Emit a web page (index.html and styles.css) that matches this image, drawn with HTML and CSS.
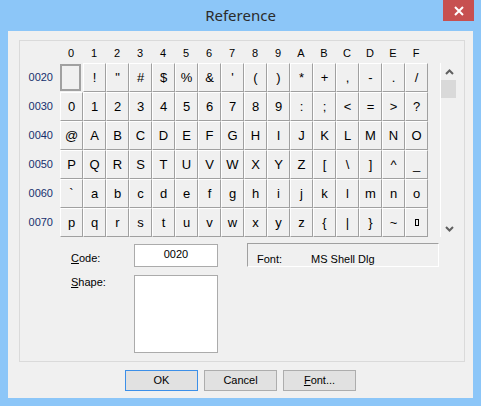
FILE: index.html
```html
<!DOCTYPE html>
<html>
<head>
<meta charset="utf-8">
<link rel="stylesheet" href="styles.css">
</head>
<body>
<div class="window">
  <div class="titlebar">
    <div class="title">Reference</div>
    <div class="close"><svg width="10" height="10" viewBox="0 0 10 10"><path d="M1 1 L9 9 M9 1 L1 9" stroke="#fff" stroke-width="2" fill="none"/></svg></div>
  </div>
  <div class="client">
    <div class="panel">
      <div class="chart">
        <div class="map" id="map">
          <div class="corner"></div>
          <div class="hd">0</div><div class="hd">1</div><div class="hd">2</div><div class="hd">3</div>
          <div class="hd">4</div><div class="hd">5</div><div class="hd">6</div><div class="hd">7</div>
          <div class="hd">8</div><div class="hd">9</div><div class="hd">A</div><div class="hd">B</div>
          <div class="hd">C</div><div class="hd">D</div><div class="hd">E</div><div class="hd">F</div>

          <div class="rl">0020</div>
          <div class="cell sel"></div><div class="cell">!</div><div class="cell">"</div><div class="cell">#</div>
          <div class="cell">$</div><div class="cell">%</div><div class="cell">&amp;</div><div class="cell">'</div>
          <div class="cell">(</div><div class="cell">)</div><div class="cell">*</div><div class="cell">+</div>
          <div class="cell">,</div><div class="cell">-</div><div class="cell">.</div><div class="cell">/</div>

          <div class="rl">0030</div>
          <div class="cell">0</div><div class="cell">1</div><div class="cell">2</div><div class="cell">3</div>
          <div class="cell">4</div><div class="cell">5</div><div class="cell">6</div><div class="cell">7</div>
          <div class="cell">8</div><div class="cell">9</div><div class="cell">:</div><div class="cell">;</div>
          <div class="cell">&lt;</div><div class="cell">=</div><div class="cell">&gt;</div><div class="cell">?</div>

          <div class="rl">0040</div>
          <div class="cell">@</div><div class="cell">A</div><div class="cell">B</div><div class="cell">C</div>
          <div class="cell">D</div><div class="cell">E</div><div class="cell">F</div><div class="cell">G</div>
          <div class="cell">H</div><div class="cell">I</div><div class="cell">J</div><div class="cell">K</div>
          <div class="cell">L</div><div class="cell">M</div><div class="cell">N</div><div class="cell">O</div>

          <div class="rl">0050</div>
          <div class="cell">P</div><div class="cell">Q</div><div class="cell">R</div><div class="cell">S</div>
          <div class="cell">T</div><div class="cell">U</div><div class="cell">V</div><div class="cell">W</div>
          <div class="cell">X</div><div class="cell">Y</div><div class="cell">Z</div><div class="cell">[</div>
          <div class="cell">\</div><div class="cell">]</div><div class="cell">^</div><div class="cell">_</div>

          <div class="rl">0060</div>
          <div class="cell">`</div><div class="cell">a</div><div class="cell">b</div><div class="cell">c</div>
          <div class="cell">d</div><div class="cell">e</div><div class="cell">f</div><div class="cell">g</div>
          <div class="cell">h</div><div class="cell">i</div><div class="cell">j</div><div class="cell">k</div>
          <div class="cell">l</div><div class="cell">m</div><div class="cell">n</div><div class="cell">o</div>

          <div class="rl">0070</div>
          <div class="cell">p</div><div class="cell">q</div><div class="cell">r</div><div class="cell">s</div>
          <div class="cell">t</div><div class="cell">u</div><div class="cell">v</div><div class="cell">w</div>
          <div class="cell">x</div><div class="cell">y</div><div class="cell">z</div><div class="cell">{</div>
          <div class="cell">|</div><div class="cell">}</div><div class="cell">~</div><div class="cell"><span class="del"></span></div>
        </div>
        <div class="scroll">
          <div class="arrow"><svg width="9" height="6" viewBox="0 0 9 6"><path d="M1 5 L4.5 1.5 L8 5" stroke="#606060" stroke-width="2" fill="none"/></svg></div>
          <div class="thumb"></div>
          <div class="track"></div>
          <div class="arrow"><svg width="9" height="6" viewBox="0 0 9 6"><path d="M1 1 L4.5 4.5 L8 1" stroke="#606060" stroke-width="2" fill="none"/></svg></div>
        </div>
      </div>
      <div class="details">
        <div class="lbl lbl-code"><u>C</u>ode:</div>
        <div class="codebox">0020</div>
        <div class="spacer"></div>
        <div class="fontbox"><span class="fk">Font:</span><span>MS Shell Dlg</span></div>
        <div class="lbl lbl-shape"><u>S</u>hape:</div>
        <div class="shapebox"></div>
      </div>
    </div>
    <div class="buttons">
      <div class="btn default">OK</div>
      <div class="btn">Cancel</div>
      <div class="btn"><u>F</u>ont...</div>
    </div>
  </div>
</div>
</body>
</html>
```
FILE: styles.css
```css
html, body {
  margin: 0;
  padding: 0;
}
body {
  background: #8cc6f8;
  font-family: "Liberation Sans", Arial, sans-serif;
  font-size: 11px;
  color: #000;
}
.window {
  width: 481px;
  height: 406px;
  box-sizing: border-box;
  background: #8cc6f8;
  display: flex;
  flex-direction: column;
  padding: 0 8px 8px 8px;
}
.titlebar {
  height: 31px;
  display: grid;
  grid-template-columns: 1fr auto 1fr;
  margin: 0 -8px;
}
.title {
  grid-column: 2;
  font-family: "Noto Sans", "Open Sans", sans-serif;
  font-size: 15px;
  color: #2b2b2b;
  line-height: 20px;
  padding-top: 5px;
}
.close {
  grid-column: 3;
  justify-self: end;
  align-self: start;
  width: 31px;
  height: 21px;
  margin-right: 7px;
  background: #c75050;
  display: flex;
  align-items: center;
  justify-content: center;
}
.close svg { display: block; }
.client {
  flex: 1;
  background: #f0f0f0;
  padding: 9px 8px 0 11px;
  display: flex;
  flex-direction: column;
}
.panel {
  width: 446px;
  height: 322px;
  box-sizing: border-box;
  border: 1px solid #dadada;
  padding-bottom: 8px;
}
.chart {
  display: flex;
  align-items: flex-start;
}
.map {
  display: grid;
  grid-template-columns: 40px repeat(16, 23px);
  grid-template-rows: 22px repeat(6, 29px);
}
.hd {
  text-align: center;
  padding-top: 6px;
  line-height: 13px;
  padding-right: 1px;
}
.rl {
  color: #162f6e;
  text-align: right;
  padding-right: 7px;
  line-height: 29px;
}
.cell {
  box-sizing: border-box;
  border-top: 1px solid #ffffff;
  border-left: 1px solid #ffffff;
  border-right: 1px solid #a0a0a0;
  border-bottom: 1px solid #a0a0a0;
  display: flex;
  align-items: center;
  justify-content: center;
  font-size: 13px;
}
.cell.sel {
  border: 2px solid #a0a0a0;
  margin: 1px 2px 1px 0;
}
.del {
  display: inline-block;
  width: 2px;
  height: 5px;
  border: 1px solid #000;
}
.scroll {
  margin-top: 22px;
  margin-left: 12px;
  width: 17px;
  height: 174px;
  box-sizing: border-box;
  border-left: 1px solid #ffffff;
  display: flex;
  flex-direction: column;
}
.arrow {
  height: 17px;
  display: flex;
  align-items: center;
  justify-content: center;
}
.arrow svg { display: block; }
.thumb {
  height: 18px;
  width: 15px;
  background: #d9d9d9;
}
.track { flex: 1; }
.details {
  margin-top: 6px;
  padding-left: 51px;
  display: grid;
  grid-template-columns: 63px 84px 29px 192px;
  grid-template-rows: 24px 78px;
  row-gap: 8px;
}
.lbl { line-height: 13px; }
.lbl-code { padding-top: 9px; }
.lbl-shape { padding-top: 1px; }
.codebox {
  margin-top: 1px;
  box-sizing: border-box;
  height: 23px;
  background: #fff;
  border: 1px solid #ababab;
  text-align: center;
  line-height: 13px;
  padding-top: 3px;
}
.fontbox {
  box-sizing: border-box;
  border-top: 1px solid #a0a0a0;
  border-left: 1px solid #a0a0a0;
  border-right: 1px solid #ffffff;
  border-bottom: 1px solid #ffffff;
  padding: 9px 0 0 9px;
  line-height: 13px;
  display: flex;
}
.fk { width: 54px; }
.shapebox {
  grid-column: 2;
  box-sizing: border-box;
  background: #fff;
  border: 1px solid #ababab;
}
.buttons {
  display: flex;
  gap: 6px;
  margin-top: 8px;
  padding-left: 106px;
}
.btn {
  box-sizing: border-box;
  width: 73px;
  height: 21px;
  background: #e1e1e1;
  border: 1px solid #adadad;
  text-align: center;
  line-height: 19px;
}
.btn.default {
  border-color: #3c8fe8;
  background: #e5f1fb;
  background: #e1e1e1;
}
```
